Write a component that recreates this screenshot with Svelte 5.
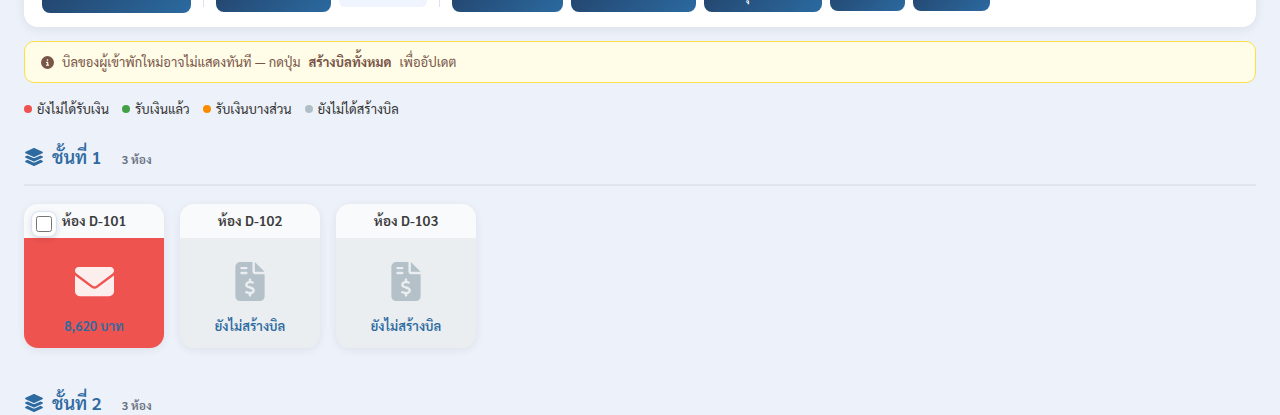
<script>
    const envelope =
        "M48 64C21.5 64 0 85.5 0 112c0 15.1 7.1 29.3 19.2 38.4L236.8 313.6c11.4 8.5 27 8.5 38.4 0L492.8 150.4c12.1-9.1 19.2-23.3 19.2-38.4c0-26.5-21.5-48-48-48H48zM0 176V384c0 35.3 28.7 64 64 64H448c35.3 0 64-28.7 64-64V176L294.4 339.2c-22.8 17.1-54 17.1-76.8 0L0 176z";
    const invoice =
        "M64 0C28.7 0 0 28.7 0 64V448c0 35.3 28.7 64 64 64H320c35.3 0 64-28.7 64-64V160H256c-17.7 0-32-14.3-32-32V0H64zM256 0V128H384L256 0zM64 80c0-8.8 7.2-16 16-16h64c8.8 0 16 7.2 16 16s-7.2 16-16 16H80c-8.8 0-16-7.2-16-16zm0 64c0-8.8 7.2-16 16-16h64c8.8 0 16 7.2 16 16s-7.2 16-16 16H80c-8.8 0-16-7.2-16-16zm128 72c8.8 0 16 7.2 16 16v17.3c8.5 1.2 16.7 3.1 24.1 5.1c8.5 2.3 13.6 11 11.3 19.6s-11 13.6-19.6 11.3c-11.1-3-22-5.2-32.1-5.3c-8.4-.1-17.4 1.8-23.6 5.5c-5.7 3.4-8.1 7.3-8.1 12.8c0 3.7 1.3 6.5 7.3 10.1c6.9 4.1 16.6 7.1 29.2 10.9l.5 .1 0 0 0 0c11.3 3.4 25.3 7.6 36.3 14.6c12.1 7.6 22.4 19.7 22.7 38.2c.3 19.3-9.6 33.3-22.9 41.6c-7.7 4.8-16.4 7.6-25.1 9.1V440c0 8.8-7.2 16-16 16s-16-7.2-16-16V422.2c-11.2-2.1-21.7-5.7-30.9-8.9l0 0c-2.1-.7-4.2-1.4-6.2-2.1c-8.4-2.8-12.9-11.9-10.1-20.2s11.9-12.9 20.2-10.1c2.5 .8 4.8 1.6 7.1 2.4l0 0 0 0 0 0c13.6 4.6 24.6 8.4 36.3 8.7c9.1 .3 17.9-1.7 23.7-5.3c5.1-3.2 7.9-7.3 7.8-14c-.1-4.6-1.8-7.8-7.7-11.6c-6.8-4.3-16.5-7.4-29-11.2l-1.6-.5 0 0c-11-3.3-24.3-7.3-34.8-13.7c-12-7.2-22.6-18.9-22.7-37.3c-.1-19.4 10.8-32.8 23.8-40.5c7.5-4.4 15.8-7.2 24.1-8.7V232c0-8.8 7.2-16 16-16z";

    const legend = [
        { name: "ยังไม่ได้รับเงิน", colour: "#ef5350" },
        { name: "รับเงินแล้ว", colour: "#43a047" },
        { name: "รับเงินบางส่วน", colour: "#fb8c00" },
        { name: "ยังไม่ได้สร้างบิล", colour: "#b0bec5" },
    ];

    let floors = [
        {
            number: 1,
            count: 3,
            rooms: [
                { name: "D-101", amount: "8,620", selected: false },
                { name: "D-102" },
                { name: "D-103" },
            ],
        },
        { number: 2, count: 3, rooms: [] },
    ];
</script>

<main>
    <div class="toolbar">
        <button class="btn large w149" aria-label="สร้างบิลทั้งหมด"></button>
        <span class="divider"></span>
        <button class="btn w115" aria-label="เลือกทั้งหมด"></button>
        <span class="counter"></span>
        <span class="divider"></span>
        <button class="btn w111" aria-label="พิมพ์บิล"></button>
        <button class="btn w125" aria-label="ส่งบิล"></button>
        <button class="btn w118">สรุปยอด</button>
        <button class="btn small w75" aria-label="ส่งออก"></button>
        <button class="btn small w77" aria-label="ลบ"></button>
    </div>

    <div class="notice">
        <svg viewBox="0 0 512 512" width="13" height="13" aria-hidden="true">
            <path
                d="M256 512A256 256 0 1 0 256 0a256 256 0 1 0 0 512zM216 336h24V272H216c-13.3 0-24-10.7-24-24s10.7-24 24-24h48c13.3 0 24 10.7 24 24v88h8c13.3 0 24 10.7 24 24s-10.7 24-24 24H216c-13.3 0-24-10.7-24-24s10.7-24 24-24zm40-208a32 32 0 1 1 0 64 32 32 0 1 1 0-64z"
            />
        </svg>
        <span>บิลของผู้เข้าพักใหม่อาจไม่แสดงทันที — กดปุ่ม</span>
        <strong>สร้างบิลทั้งหมด</strong>
        <span>เพื่ออัปเดต</span>
    </div>

    <div class="legend">
        {#each legend as item}
            <span class="legend-item">
                <span class="dot" style="background: {item.colour}"></span>
                {item.name}
            </span>
        {/each}
    </div>

    {#each floors as floor}
        <section>
            <div class="floor-header">
                <svg viewBox="0 0 576 512" width="20" height="18" aria-hidden="true">
                    <path
                        d="M264.5 5.2c14.9-6.9 32.1-6.9 47 0l218.6 101c8.5 3.9 13.9 12.4 13.9 21.8s-5.4 17.9-13.9 21.8l-218.6 101c-14.9 6.9-32.1 6.9-47 0L45.9 149.8C37.4 145.8 32 137.3 32 128s5.4-17.9 13.9-21.8L264.5 5.2zM476.9 209.6l53.2 24.6c8.5 3.9 13.9 12.4 13.9 21.8s-5.4 17.9-13.9 21.8l-218.6 101c-14.9 6.9-32.1 6.9-47 0L45.9 277.8C37.4 273.8 32 265.3 32 256s5.4-17.9 13.9-21.8l53.2-24.6 152 70.2c23.4 10.8 50.4 10.8 73.8 0l152-70.2zm-152 198.2l152-70.2 53.2 24.6c8.5 3.9 13.9 12.4 13.9 21.8s-5.4 17.9-13.9 21.8l-218.6 101c-14.9 6.9-32.1 6.9-47 0L45.9 405.8C37.4 401.8 32 393.3 32 384s5.4-17.9 13.9-21.8l53.2-24.6 152 70.2c23.4 10.8 50.4 10.8 73.8 0z"
                    />
                </svg>
                <div class="floor-title">
                    <h2>ชั้นที่ {floor.number}</h2>
                    <span class="floor-count">{floor.count} ห้อง</span>
                </div>
            </div>
            <div class="rooms">
                {#each floor.rooms as room}
                    <div class="room" class:unpaid={room.amount}>
                        {#if room.amount}
                            <label class="picker">
                                <input
                                    type="checkbox"
                                    aria-label="เลือกห้อง {room.name}"
                                    bind:checked={room.selected}
                                />
                            </label>
                        {/if}
                        <div class="room-name">ห้อง {room.name}</div>
                        <div class="room-body">
                            {#if room.amount}
                                <svg viewBox="0 0 512 512" width="39" height="39" aria-hidden="true">
                                    <path d={envelope} />
                                </svg>
                                <div class="status">{room.amount} บาท</div>
                            {:else}
                                <svg viewBox="0 0 384 512" width="30" height="39" aria-hidden="true">
                                    <path d={invoice} />
                                </svg>
                                <div class="status">ยังไม่สร้างบิล</div>
                            {/if}
                        </div>
                    </div>
                {/each}
            </div>
        </section>
    {/each}
</main>

<style>
    :global(body) {
        background: #edf1f9;
        overflow: hidden;
    }
    main {
        padding: 0 24px;
        font-family: Sarabun, "Noto Sans", sans-serif;
        font-size: 13px;
        color: #333;
    }
    svg {
        flex: none;
        fill: currentColor;
    }
    .toolbar {
        display: flex;
        align-items: center;
        gap: 8px;
        margin-top: -41px;
        padding: 14px 18px;
        background: #fff;
        border-radius: 14px;
        box-shadow: 0 2px 12px rgba(0, 0, 0, 0.08);
    }
    .btn {
        height: 38px;
        padding: 0 16px;
        border: none;
        border-radius: 8px;
        background: linear-gradient(135deg, #234168, #2b6aa0);
        color: #fff;
        font: inherit;
        cursor: pointer;
    }
    .large {
        height: 40px;
    }
    .small {
        height: 36px;
    }
    .w149 {
        width: 149px;
    }
    .w115 {
        width: 115px;
    }
    .w111 {
        width: 111px;
    }
    .w125 {
        width: 125px;
    }
    .w118 {
        width: 118px;
        padding: 2px 0 0 32px;
        text-align: left;
        font-weight: 600;
    }
    .w75 {
        width: 75px;
    }
    .w77 {
        width: 77px;
    }
    .divider {
        width: 1px;
        height: 28px;
        margin: 0 4px;
        background: #dde3ee;
    }
    .counter {
        width: 88px;
        height: 28px;
        border-radius: 6px;
        background: #f0f4ff;
    }
    .notice {
        display: flex;
        align-items: center;
        gap: 8px;
        margin-top: 14px;
        padding: 10px 16px;
        line-height: 20px;
        border: 1px solid #f9e04b;
        border-radius: 10px;
        background: #fffde7;
        color: #795548;
    }
    .legend {
        display: flex;
        gap: 13px;
        margin: 16px 0 11px;
        line-height: 20px;
    }
    .legend-item {
        display: flex;
        align-items: center;
        gap: 5px;
    }
    .dot {
        width: 8px;
        height: 8px;
        border-radius: 50%;
    }
    section {
        margin-bottom: 28px;
    }
    .floor-header {
        display: flex;
        align-items: center;
        gap: 8px;
        height: 54px;
        margin-bottom: 18px;
        border-bottom: 2px solid #dfe5ee;
        color: #2d6a9f;
    }
    .floor-title {
        display: flex;
        align-items: baseline;
        gap: 20px;
    }
    h2 {
        margin: 0;
        font-size: 18px;
        font-weight: 600;
        line-height: 28px;
    }
    .floor-count {
        font-size: 12px;
        font-weight: 600;
        color: #667080;
    }
    .rooms {
        display: flex;
        flex-wrap: wrap;
        gap: 16px;
    }
    .room {
        position: relative;
        width: 140px;
        overflow: hidden;
        border-radius: 14px;
        background: #eaeef1;
        box-shadow: 0 2px 10px rgba(0, 0, 0, 0.07);
    }
    .room-name {
        padding-bottom: 2px;
        line-height: 32px;
        text-align: center;
        font-size: 14px;
        font-weight: 600;
        color: #3c3c3c;
        background: #f9fafc;
    }
    .room-body {
        display: flex;
        flex-direction: column;
        align-items: center;
        gap: 15px;
        padding: 24px 0 12px;
        color: #b4c1c8;
    }
    .unpaid .room-body {
        background: #ef5350;
        color: #fdeeee;
    }
    .status {
        line-height: 20px;
        font-weight: 600;
        color: #2d6a9f;
    }
    .picker {
        position: absolute;
        top: 7px;
        left: 7px;
        display: flex;
        padding: 4px;
        border: 1px solid #d6e4f5;
        border-radius: 8px;
        background: #fff;
        box-shadow: 0 2px 6px rgba(0, 0, 0, 0.12);
    }
    .picker input {
        width: 16px;
        height: 16px;
        margin: 0;
    }
</style>
